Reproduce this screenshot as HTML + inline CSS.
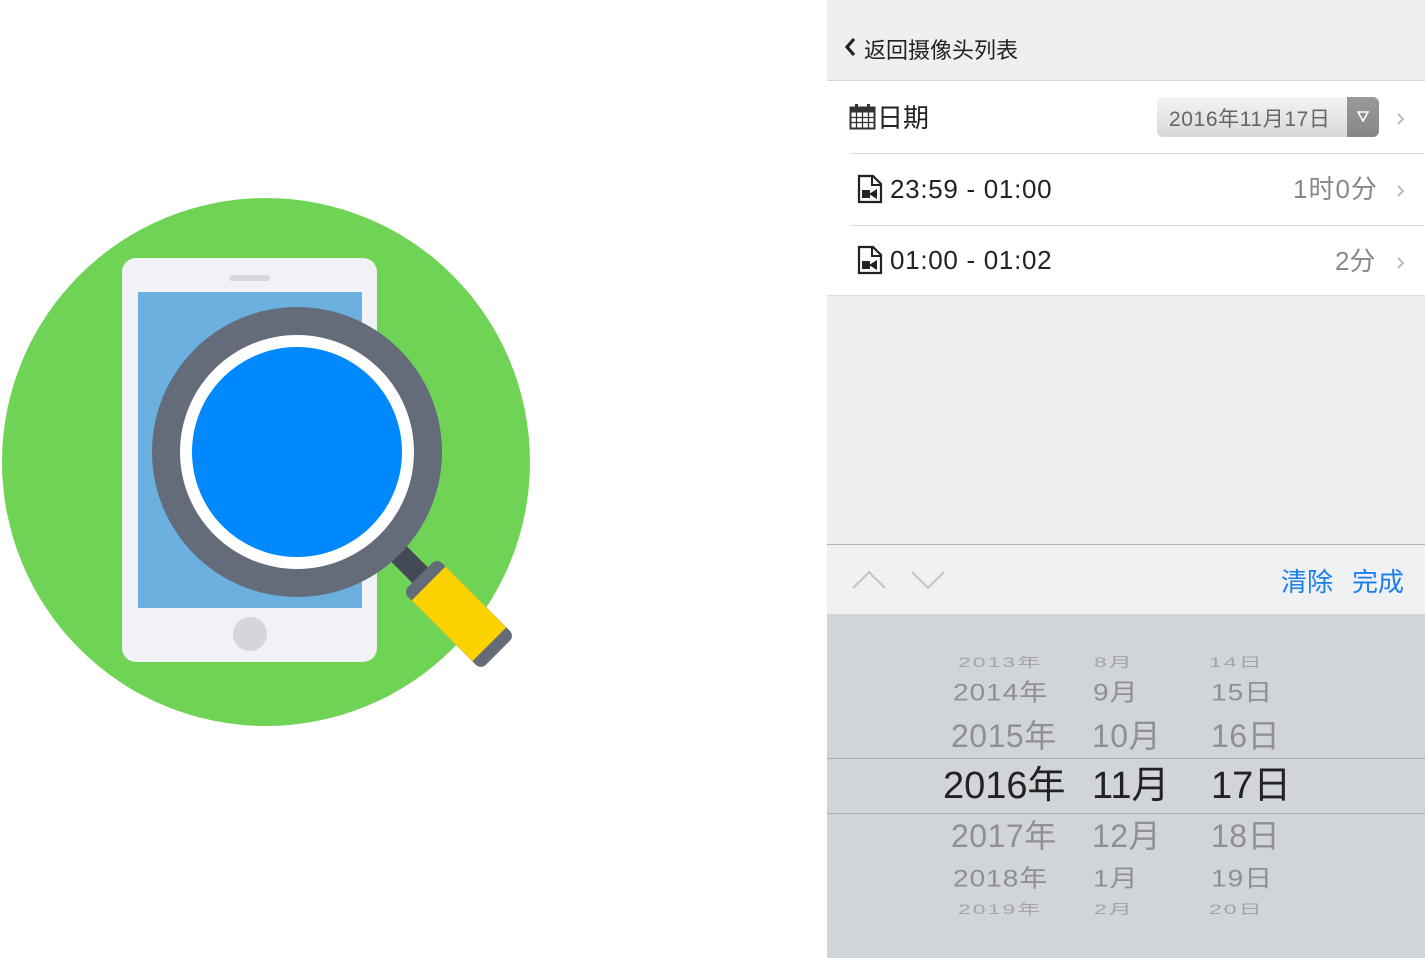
<!DOCTYPE html>
<html><head><meta charset="utf-8"><style>
*{margin:0;padding:0;box-sizing:border-box}
body{width:1425px;height:958px;background:#fff;position:relative;overflow:hidden;font-family:"Liberation Sans","Noto Sans CJK SC",sans-serif}
.a{position:absolute;white-space:nowrap}
.p{position:absolute;left:827px;width:598px}
.row{background:#fff;height:72px}
.sep{position:absolute;left:850px;right:0;height:1px;background:#dcdcdc}
.pk{position:absolute;line-height:1;white-space:nowrap;color:#8e9094;transform-origin:left center}
.s1{font-size:23px;transform:scaleY(.6);color:#a3a5a9;letter-spacing:2px}
.s2{font-size:28px;transform:scaleY(.85);letter-spacing:1px}
.s3{font-size:32px;letter-spacing:.5px}
</style></head><body>
<svg class="a" style="left:0;top:0" width="827" height="958">
<circle cx="266" cy="462" r="264" fill="#6fd455"/>
<rect x="122" y="258" width="255" height="404" rx="14" fill="#f1f2f6"/>
<rect x="138" y="292" width="224" height="316" fill="#6cb0e0"/>
<rect x="229" y="275" width="41" height="6" rx="3" fill="#d5d6da"/>
<circle cx="250" cy="634" r="17" fill="#d5d6da"/>
<g transform="translate(297,452) rotate(45)">
<rect x="140" y="-11" width="42" height="22" fill="#434a56"/>
<rect x="174" y="-24" width="110" height="48" rx="7" fill="#646b79"/>
<rect x="186" y="-24" width="86" height="48" fill="#fad200"/>
</g>
<circle cx="297" cy="452" r="145" fill="#646b79"/>
<circle cx="297" cy="452" r="117" fill="#fff"/>
<circle cx="297" cy="452" r="105" fill="#0088ff"/>
</svg>

<div class="p" style="top:0;height:81px;background:#efefef;border-bottom:1px solid #d8d8d8"></div>
<svg class="a" style="left:843px;top:37px" width="14" height="20"><path d="M11 2 L4 10 L11 18" stroke="#222" stroke-width="3.2" fill="none"/></svg>
<div class="a" style="left:864px;top:33px;font-size:22px;color:#222">返回摄像头列表</div>

<div class="p row" style="top:82px"></div>
<div class="p row" style="top:154px"></div>
<div class="p row" style="top:226px;height:69px"></div>
<div class="sep" style="top:153px"></div>
<div class="sep" style="top:225px"></div>
<div class="p" style="top:295px;height:1px;background:#dcdcdc"></div>
<div class="p" style="top:296px;height:248px;background:#efeff0"></div>

<svg class="a" style="left:849px;top:103px" width="28" height="28"><rect x="1.5" y="4.5" width="24" height="21" fill="none" stroke="#333" stroke-width="2"/><rect x="1.5" y="4.5" width="24" height="5" fill="#333"/><path d="M1.5 14.5H25.5M1.5 19.5H25.5M7.5 9.5V25.5M13.5 9.5V25.5M19.5 9.5V25.5" stroke="#333" stroke-width="1.3"/><rect x="6" y="1" width="3" height="6" fill="#333"/><rect x="18" y="1" width="3" height="6" fill="#333"/></svg>
<div class="a" style="left:877px;top:98px;font-size:26px;color:#222">日期</div>
<div class="a" style="left:1157px;top:97px;width:222px;height:40px;border-radius:6px;background:linear-gradient(#f4f4f4,#d8d8d8)"></div>
<div class="a" style="left:1347px;top:97px;width:32px;height:40px;border-radius:0 6px 6px 0;background:linear-gradient(#9a9a9a,#868686)"></div>
<svg class="a" style="left:1355px;top:110px" width="16" height="14"><path d="M3 2 L13 2 L8 11 Z" fill="none" stroke="#fff" stroke-width="1.6"/></svg>
<div class="a" style="left:1169px;top:103px;font-size:21px;color:#666;letter-spacing:.6px">2016年11月17日</div>

<svg class="a" style="left:857px;top:174px" width="26" height="30"><path d="M2 2H16L24 10V28H2Z" fill="none" stroke="#222" stroke-width="2.2"/><path d="M15 2V11H24" fill="none" stroke="#222" stroke-width="2"/><rect x="5" y="16" width="8" height="8" fill="#222"/><path d="M12 20L20 15V25Z" fill="#222"/></svg>
<div class="a" style="left:890px;top:174px;font-size:26px;color:#222;letter-spacing:.7px">23:59 - 01:00</div>
<div class="a" style="left:1293px;top:169px;font-size:26px;color:#888;letter-spacing:1px">1时0分</div>
<svg class="a" style="left:857px;top:245px" width="26" height="30"><path d="M2 2H16L24 10V28H2Z" fill="none" stroke="#222" stroke-width="2.2"/><path d="M15 2V11H24" fill="none" stroke="#222" stroke-width="2"/><rect x="5" y="16" width="8" height="8" fill="#222"/><path d="M12 20L20 15V25Z" fill="#222"/></svg>
<div class="a" style="left:890px;top:245px;font-size:26px;color:#222;letter-spacing:.7px">01:00 - 01:02</div>
<div class="a" style="left:1335px;top:241px;font-size:26px;color:#888">2分</div>
<svg class="a" style="left:1396px;top:112px" width="10" height="160"><path d="M2 2L7 7L2 12M2 74L7 79L2 84M2 146L7 151L2 156" stroke="#bbb" stroke-width="2" fill="none"/></svg>

<div class="p" style="top:544px;height:70px;background:#f0f1f3;border-top:1px solid #b5b5b5"></div>
<svg class="a" style="left:850px;top:566px" width="100" height="26"><path d="M3 22L19 6L35 22M62 6L78 22L94 6" stroke="#c4c4c6" stroke-width="2" fill="none"/></svg>
<div class="a" style="left:1281px;top:562px;font-size:26px;color:#1a7ff3">清除</div>
<div class="a" style="left:1352px;top:562px;font-size:26px;color:#1a7ff3">完成</div>

<div class="p" style="top:614px;height:344px;background:#d1d4d9"></div>
<div class="p" style="top:758px;height:1px;background:#a9abb0"></div>
<div class="p" style="top:813px;height:1px;background:#a9abb0"></div>

<div class="pk s1" style="left:958px;top:651px">2013年</div>
<div class="pk s1" style="left:1094px;top:651px">8月</div>
<div class="pk s1" style="left:1209px;top:651px">14日</div>
<div class="pk s2" style="left:953px;top:679px">2014年</div>
<div class="pk s2" style="left:1093px;top:679px">9月</div>
<div class="pk s2" style="left:1211px;top:679px">15日</div>
<div class="pk s3" style="left:951px;top:720px">2015年</div>
<div class="pk s3" style="left:1092px;top:720px">10月</div>
<div class="pk s3" style="left:1211px;top:720px">16日</div>
<div class="pk" style="left:943px;top:767px;font-size:38px;color:#222">2016年</div>
<div class="pk" style="left:1092px;top:767px;font-size:38px;color:#222">11月</div>
<div class="pk" style="left:1211px;top:767px;font-size:38px;color:#222">17日</div>
<div class="pk s3" style="left:951px;top:820px">2017年</div>
<div class="pk s3" style="left:1092px;top:820px">12月</div>
<div class="pk s3" style="left:1211px;top:820px">18日</div>
<div class="pk s2" style="left:953px;top:865px">2018年</div>
<div class="pk s2" style="left:1093px;top:865px">1月</div>
<div class="pk s2" style="left:1211px;top:865px">19日</div>
<div class="pk s1" style="left:958px;top:898px">2019年</div>
<div class="pk s1" style="left:1094px;top:898px">2月</div>
<div class="pk s1" style="left:1209px;top:898px">20日</div>
</body></html>
